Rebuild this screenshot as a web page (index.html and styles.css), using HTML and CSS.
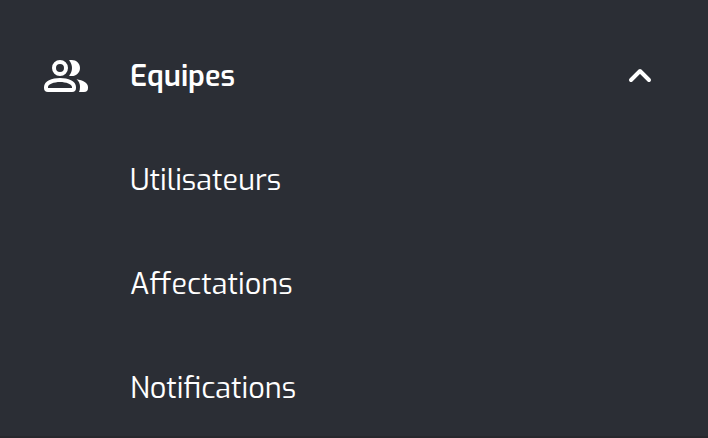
FILE: index.html
```html
<!DOCTYPE html>
<html lang="fr">
<head>
<meta charset="utf-8">
<title>Equipes</title>
<link rel="stylesheet" href="styles.css">
</head>
<body>
<nav class="menu">
  <div class="row heading">
    <svg class="team" viewBox="0 0 44 34" fill="#fff" aria-hidden="true">
      <path fill-rule="evenodd" d="M16 1a8 8 0 1 1 0 16a8 8 0 0 1 0-16zM16 5a4 4 0 1 0 0 8a4 4 0 0 0 0-8z"/>
      <path d="M25 1.300C31 -.2 36 3.500 36 9s-5 9.200-11 7.700C29 12 29 6 25 1.300z"/>
      <path fill-rule="evenodd" d="M0 28C0 22 8 19 16 19s16 3 16 9v1q0 4-4 4H4q-4 0-4-4zM4 29h24v-1c0-2.800-6-5-12-5S4 25.200 4 28z"/>
      <path d="M32.500 20.200C39 21 44 24 44 28v1q0 4-4 4h-5q1-2 1-5 0-5-3.500-7.800z"/>
    </svg>
    <span class="label title">Equipes</span>
    <svg class="chevron" viewBox="0 0 24 16" aria-hidden="true"><path d="M3 12L12 3L21 12" fill="none" stroke="#fff" stroke-width="4" stroke-linecap="round" stroke-linejoin="round"/></svg>
  </div>
  <div class="row"><span class="label">Utilisateurs</span></div>
  <div class="row"><span class="label">Affectations</span></div>
  <div class="row"><span class="label">Notifications</span></div>
</nav>
</body>
</html>
```
FILE: styles.css
```css
body { margin: 0; background: #2b2e35; }
.menu {
  box-sizing: border-box;
  height: 438px;
  padding-top: 24px;
  overflow: hidden;
  border-bottom: 2px solid #27282d;
  color: #fff;
  font-family: Exo, "Exo 2", Roboto, sans-serif;
  font-size: 28.8px;
  font-weight: 400;
}
.row { display: flex; align-items: center; height: 104px; padding-left: 130px; padding-right: 56px; }
.heading { padding-left: 44px; }
.team { width: 44px; height: 34px; margin-right: 42px; }
.chevron { width: 24px; height: 16px; margin-left: auto; }
.label { white-space: nowrap; }
.title { font-weight: 600; }
```
